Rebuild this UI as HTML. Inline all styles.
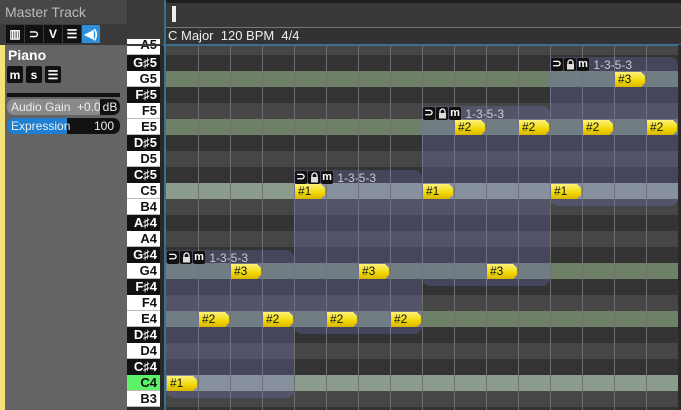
<!DOCTYPE html>
<html><head><style>
*{margin:0;padding:0;box-sizing:border-box}
body{width:681px;height:410px;overflow:hidden;background:#2a2a2a;font-family:"Liberation Sans",sans-serif;position:relative}
.a{position:absolute}
.r{position:absolute;left:166px;width:512px;height:16px}
.b{background:#333}.w{background:#464646}.C{background:#8c9c8c}.E{background:#6e8068}
.k{position:absolute;left:127px;width:33px;height:16px;font-weight:bold;font-size:13px;text-align:right;padding-right:3px;line-height:16px;border-bottom:1px solid #bbb}
.kw{background:#fff;color:#111}.kb{background:#111;color:#fff;border-bottom:1px solid #111}
.v{position:absolute;top:45px;width:1px;height:365px;background:#6e6e6e}
.blk{position:absolute;background:rgba(120,120,200,0.28);border-radius:0 8px 8px 8px}
.n{position:absolute;width:30px;height:15px;background:linear-gradient(#fff27a,#f0d800 60%,#d8b800);clip-path:polygon(0 0,26px 0,30px 4px,30px 11px,26px 15px,0 15px);font-size:12px;line-height:15px;padding-left:3px;color:#111}
.h{position:absolute;height:14px;font-size:12px;color:#ccc;line-height:14px;white-space:nowrap}
.h i{display:inline-block;width:12px;height:13px;background:#111;color:#fff;font-style:normal;font-weight:bold;text-align:center;font-size:11px;line-height:13px;margin-right:1px;border-radius:2px;vertical-align:top}
.h i svg{display:block;margin:1px auto 0}
.ic{display:inline-block;width:18px;height:18px;background:#111;color:#fff;text-align:center;font-size:12px;line-height:18px;font-weight:bold;margin-right:1px;vertical-align:top}
</style></head><body>
<div class="a" style="left:0;top:0;width:127px;height:24px;background:#474747"></div>
<div class="a" style="left:5px;top:4px;font-size:14px;color:#bbb">Master Track</div>
<div class="a" style="left:0;top:24px;width:127px;height:21px;background:#3a3a3a"></div>
<div class="a" style="left:6px;top:25px;white-space:nowrap;font-size:0"><span class="ic">▥</span><span class="ic">⊃</span><span class="ic">V</span><span class="ic">☰</span><span class="ic" style="background:#2f8fd8">◀)</span></div>
<div class="a" style="left:0;top:45px;width:127px;height:365px;background:#646464"></div>
<div class="a" style="left:0;top:45px;width:5px;height:365px;background:#f2e27a"></div>
<div class="a" style="left:8px;top:47px;font-size:14px;font-weight:bold;color:#fff">Piano</div>
<div class="a" style="left:7px;top:66px;font-size:0"><span class="ic" style="width:16px;height:17px;border-radius:2px">m</span><span class="ic" style="width:16px;height:17px;border-radius:2px;margin-left:2px">s</span><span class="ic" style="width:16px;height:17px;border-radius:2px;margin-left:2px">☰</span></div>
<div class="a" style="left:7px;top:93px;width:113px;height:4px;background:#111"></div>
<div class="a" style="left:7px;top:99px;width:113px;height:16px;background:#8a8a8a;border-radius:7px;overflow:hidden;font-size:12px;color:#eee;line-height:16px"><span style="padding-left:4px">Audio Gain&nbsp; +0.0</span><span style="position:absolute;right:0;top:0;width:20px;height:16px;background:#111;text-align:center">dB</span></div>
<div class="a" style="left:7px;top:118px;width:113px;height:16px;background:#111;border-radius:7px;overflow:hidden;font-size:12px;color:#eee;line-height:16px"><span style="position:absolute;left:0;top:0;width:60px;height:16px;background:#1f7fd0"></span><span style="position:absolute;left:4px">Expression</span><span style="position:absolute;right:6px">100</span></div>
<div class="a" style="left:127px;top:0;width:39px;height:45px;background:#3a3a3a"></div>
<div class="a" style="left:166px;top:0;width:515px;height:3px;background:#1e1e1e"></div>
<div class="a" style="left:166px;top:3px;width:515px;height:24px;background:#383838"></div>
<div class="a" style="left:166px;top:27px;width:515px;height:1px;background:#777"></div>
<div class="a" style="left:166px;top:28px;width:515px;height:16px;background:#323232"></div>
<div class="a" style="left:172px;top:6px;width:4px;height:16px;background:#eee"></div>
<div class="a" style="left:168px;top:28px;font-size:13px;color:#eee;white-space:pre">C Major  120 BPM  4/4</div>
<div class="a" style="left:163px;top:44px;width:518px;height:2px;background:#3d6f8e"></div>
<div class="a" style="left:164px;top:0;width:2px;height:410px;background:#3d6f8e"></div>
<div class="r w" style="top:46px;height:9px"></div>
<div class="r b" style="top:55px"></div><div class="r E" style="top:71px"></div><div class="r b" style="top:87px"></div>
<div class="r w" style="top:103px"></div><div class="r E" style="top:119px"></div><div class="r b" style="top:135px"></div>
<div class="r w" style="top:151px"></div><div class="r b" style="top:167px"></div><div class="r C" style="top:183px"></div>
<div class="r w" style="top:199px"></div><div class="r b" style="top:215px"></div><div class="r w" style="top:231px"></div>
<div class="r b" style="top:247px"></div><div class="r E" style="top:263px"></div><div class="r b" style="top:279px"></div>
<div class="r w" style="top:295px"></div><div class="r E" style="top:311px"></div><div class="r b" style="top:327px"></div>
<div class="r w" style="top:343px"></div><div class="r b" style="top:359px"></div><div class="r C" style="top:375px"></div>
<div class="r w" style="top:391px"></div><div class="r b" style="top:407px;height:3px"></div>
<div class="v" style="left:198px"></div><div class="v" style="left:230px"></div><div class="v" style="left:262px"></div><div class="v" style="left:294px"></div><div class="v" style="left:326px"></div><div class="v" style="left:358px"></div><div class="v" style="left:390px"></div><div class="v" style="left:422px"></div><div class="v" style="left:454px"></div><div class="v" style="left:486px"></div><div class="v" style="left:518px"></div><div class="v" style="left:550px"></div><div class="v" style="left:582px"></div><div class="v" style="left:614px"></div><div class="v" style="left:646px"></div>
<div class="blk" style="left:166px;top:250px;width:128px;height:148px"></div>
<div class="blk" style="left:294px;top:170px;width:128px;height:164px"></div>
<div class="blk" style="left:422px;top:106px;width:128px;height:180px"></div>
<div class="blk" style="left:550px;top:57px;width:128px;height:149px"></div>
<div class="h" style="left:167px;top:251px"><i>⊃</i><i><svg width="9" height="11" viewBox="0 0 9 11"><path d="M2 5V3.5a2.5 2.5 0 0 1 5 0V5" fill="none" stroke="#ddd" stroke-width="1.4"/><rect x="1" y="5" width="7" height="5.5" fill="#ddd"/></svg></i><i>m</i> 1-3-5-3</div>
<div class="h" style="left:295px;top:171px"><i>⊃</i><i><svg width="9" height="11" viewBox="0 0 9 11"><path d="M2 5V3.5a2.5 2.5 0 0 1 5 0V5" fill="none" stroke="#ddd" stroke-width="1.4"/><rect x="1" y="5" width="7" height="5.5" fill="#ddd"/></svg></i><i>m</i> 1-3-5-3</div>
<div class="h" style="left:423px;top:107px"><i>⊃</i><i><svg width="9" height="11" viewBox="0 0 9 11"><path d="M2 5V3.5a2.5 2.5 0 0 1 5 0V5" fill="none" stroke="#ddd" stroke-width="1.4"/><rect x="1" y="5" width="7" height="5.5" fill="#ddd"/></svg></i><i>m</i> 1-3-5-3</div>
<div class="h" style="left:551px;top:58px"><i>⊃</i><i><svg width="9" height="11" viewBox="0 0 9 11"><path d="M2 5V3.5a2.5 2.5 0 0 1 5 0V5" fill="none" stroke="#ddd" stroke-width="1.4"/><rect x="1" y="5" width="7" height="5.5" fill="#ddd"/></svg></i><i>m</i> 1-3-5-3</div>
<div class="n" style="left:167px;top:376px">#1</div>
<div class="n" style="left:295px;top:184px">#1</div><div class="n" style="left:423px;top:184px">#1</div><div class="n" style="left:551px;top:184px">#1</div>
<div class="n" style="left:199px;top:312px">#2</div><div class="n" style="left:263px;top:312px">#2</div><div class="n" style="left:327px;top:312px">#2</div><div class="n" style="left:391px;top:312px">#2</div>
<div class="n" style="left:455px;top:120px">#2</div><div class="n" style="left:519px;top:120px">#2</div><div class="n" style="left:583px;top:120px">#2</div><div class="n" style="left:647px;top:120px">#2</div>
<div class="n" style="left:231px;top:264px">#3</div><div class="n" style="left:359px;top:264px">#3</div><div class="n" style="left:487px;top:264px">#3</div>
<div class="n" style="left:615px;top:72px">#3</div>
<div class="a" style="left:678px;top:45px;width:3px;height:365px;background:#2a2a2a"></div>
<div class="k kw" style="top:39px;height:16px;line-height:12px;overflow:hidden">A5</div>
<div class="k kb" style="top:55px">G♯5</div><div class="k kw" style="top:71px">G5</div><div class="k kb" style="top:87px">F♯5</div>
<div class="k kw" style="top:103px">F5</div><div class="k kw" style="top:119px">E5</div><div class="k kb" style="top:135px">D♯5</div>
<div class="k kw" style="top:151px">D5</div><div class="k kb" style="top:167px">C♯5</div><div class="k kw" style="top:183px">C5</div>
<div class="k kw" style="top:199px">B4</div><div class="k kb" style="top:215px">A♯4</div><div class="k kw" style="top:231px">A4</div>
<div class="k kb" style="top:247px">G♯4</div><div class="k kw" style="top:263px">G4</div><div class="k kb" style="top:279px">F♯4</div>
<div class="k kw" style="top:295px">F4</div><div class="k kw" style="top:311px">E4</div><div class="k kb" style="top:327px">D♯4</div>
<div class="k kw" style="top:343px">D4</div><div class="k kb" style="top:359px">C♯4</div><div class="k kw" style="top:375px;background:#5cf26a">C4</div>
<div class="k kw" style="top:391px">B3</div>
<div class="a" style="left:127px;top:44px;width:33px;height:2px;background:#3a3a3a"></div>
</body></html>
